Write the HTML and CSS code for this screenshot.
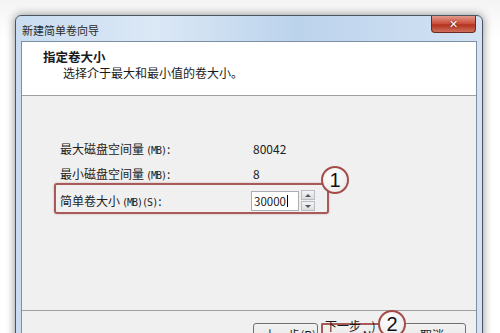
FILE: index.html
```html
<!DOCTYPE HTML>
<html lang="zh-CN">
<head>
	<meta charset="utf-8" />
	<title>新建简单卷向导</title>
	<link rel="stylesheet" href="styles.css">
</head>
<body>
	<div class="window">
		<div class="titlebar">
			<span class="title">新建简单卷向导</span>
			<div class="close"><span>✕</span></div>
		</div>
		<div class="content">
			<div class="header">
				<div class="head_title">指定卷大小</div>
				<div class="head_sub">选择介于最大和最小值的卷大小。</div>
			</div>
			<div class="main">
				<div class="row">
					<span class="label">最大磁盘空间量<small>(MB)</small>:</span>
					<span class="value">80042</span>
				</div>
				<div class="row">
					<span class="label">最小磁盘空间量<small>(MB)</small>:</span>
					<span class="value">8</span>
				</div>
				<div class="row row_input">
					<span class="label">简单卷大小<small>(MB)(S)</small>:</span>
					<div class="spin_field">
						<div class="input">30000<span class="caret"></span></div>
						<div class="spinner">
							<div class="spin_btn"><span class="arrow_up"></span></div>
							<div class="spin_btn"><span class="arrow_down"></span></div>
						</div>
					</div>
				</div>

				<!-- annotation marks -->
				<div class="mark_box"></div>
				<div class="badge badge_1">1</div>
			</div>
			<div class="footer">
				<div class="btn">&lt; 上一步(<u>B</u>)</div>
				<div class="btn btn_next">下一步(<u>N</u>) &gt;</div>
				<div class="btn btn_cancel">取消</div>
				<div class="badge badge_2">2</div>
			</div>
		</div>
	</div>
</body>
</html>
```

FILE: styles.css
```css
html, body{
	margin: 0;
	padding: 0;
	height: 100%;
	overflow: hidden;
}

body{
	padding: 15px 0 0 15px;
	box-sizing: border-box;
	background: linear-gradient(to bottom, #f4f4f4, #ffffff 40px);
	font-family: "Noto Sans CJK SC", "Liberation Sans", sans-serif;
	font-size: 12px;
	color: #1a1a1a;
}

.window{
	width: 468px;
	height: 340px;
	box-sizing: border-box;
	border: 1px solid #4d5560;
	border-radius: 6px 6px 0 0;
	padding: 0 5px;
	background: linear-gradient(to right, #c9dcf1, #dbe8f6 30%, #bcd3ec 60%, #d3e3f4);
	box-shadow: 0 0 10px rgba(0, 0, 0, 0.45);
}

.titlebar{
	height: 25px;
	display: flex;
	align-items: center;
	justify-content: space-between;
}

	.title{
		font-size: 11px;
		color: #2a2a2a;
		padding-left: 1px;
		padding-top: 2px;
	}

	.close{
		align-self: flex-start;
		width: 43px;
		height: 16px;
		margin-right: 1px;
		border: 1px solid #6b2a22;
		border-top: 0;
		border-radius: 0 0 4px 4px;
		background: linear-gradient(to bottom, #e39a8c, #c94a36 50%, #b0321f 55%, #d0705c);
		display: flex;
		align-items: center;
		justify-content: center;
	}
		.close span{
			color: #ffffff;
			font-family: "DejaVu Sans", sans-serif;
			font-size: 11px;
			font-weight: bold;
			line-height: 1;
			text-shadow: 0 0 2px #5a1a10;
		}

.content{
	border: 1px solid #7e8ea3;
	background: #f0f0f0;
	height: 300px;
	box-sizing: border-box;
}

.header{
	height: 54px;
	background: #ffffff;
	border-bottom: 1px solid #a0a0a0;
	box-sizing: border-box;
	padding: 7px 0 0 21px;
}
	.head_title{
		font-weight: bold;
		font-size: 12.5px;
		line-height: 16px;
	}
	.head_sub{
		padding-left: 20px;
		line-height: 15px;
		font-size: 12px;
	}

.main{
	position: relative;
	height: 215px;
	box-sizing: border-box;
	padding-top: 40px;
	border-bottom: 1px solid #a0a0a0;
}

	.row{
		display: flex;
		align-items: center;
		height: 25px;
		padding-left: 38px;
	}
		.row small{
			font-family: "DejaVu Sans Mono", monospace;
			font-size: 10px;
			letter-spacing: -1px;
			padding-left: 2px;
			padding-right: 1px;
		}
		.label{
			width: 193px;
			color: #222;
		}
		.value{
			color: #222;
		}

	.row_input{
		margin-top: 1px;
		height: 27px;
	}

	.spin_field{
		display: flex;
		align-items: center;
		gap: 2px;
		margin-left: -2px;
	}
		.input{
			width: 44px;
			height: 18px;
			border: 1px solid #abadb3;
			background: #ffffff;
			padding-left: 2px;
			line-height: 18px;
			font-size: 11.5px;
			display: flex;
			align-items: center;
		}
		.caret{
			display: inline-block;
			width: 1px;
			height: 12px;
			background: #000;
			margin-left: 1px;
		}
		.spinner{
			display: flex;
			flex-direction: column;
			gap: 1px;
		}
		.spin_btn{
			width: 12px;
			height: 8px;
			border: 1px solid #b8bcc4;
			background: linear-gradient(to bottom, #f4f4f4, #dcdcdc);
			display: flex;
			align-items: center;
			justify-content: center;
		}
		.arrow_up{
			border-left: 3px solid transparent;
			border-right: 3px solid transparent;
			border-bottom: 3px solid #4a5a6a;
		}
		.arrow_down{
			border-left: 3px solid transparent;
			border-right: 3px solid transparent;
			border-top: 3px solid #4a5a6a;
		}

	.mark_box{
		position: absolute;
		left: 32px;
		top: 87px;
		width: 275px;
		height: 31px;
		border: 2px solid #a85a58;
		border-radius: 3px;
		box-sizing: border-box;
		box-shadow: 0 0 2px rgba(168, 90, 88, 0.5);
	}

	.badge{
		position: absolute;
		width: 28px;
		height: 28px;
		box-sizing: border-box;
		border: 2px solid #a44c48;
		border-radius: 50%;
		background: radial-gradient(circle at 40% 35%, #ffffff, #eeeeee 70%, #d8d8d8);
		display: flex;
		align-items: center;
		justify-content: center;
		font-family: "Liberation Sans", sans-serif;
		font-size: 20px;
		color: #111;
		line-height: 1;
	}
	.badge_1{
		left: 299px;
		top: 70px;
	}

.footer{
	position: relative;
	display: flex;
	padding: 12px 0 0 231px;
	gap: 3px;
}
	.btn{
		width: 65px;
		height: 22px;
		box-sizing: border-box;
		border: 1px solid #707070;
		border-radius: 3px;
		background: linear-gradient(to bottom, #f2f2f2, #ebebeb 50%, #dddddd 50%, #cfcfcf);
		display: flex;
		align-items: center;
		justify-content: center;
		font-size: 12px;
	}
	.btn_next{
		border: 2px solid #a85a58;
		border-radius: 1px;
		justify-content: flex-start;
		padding-left: 2px;
	}
	.btn_cancel{
		margin-left: 9px;
		width: 68px;
	}
	.badge_2{
		left: 356px;
		top: -1px;
	}
```
